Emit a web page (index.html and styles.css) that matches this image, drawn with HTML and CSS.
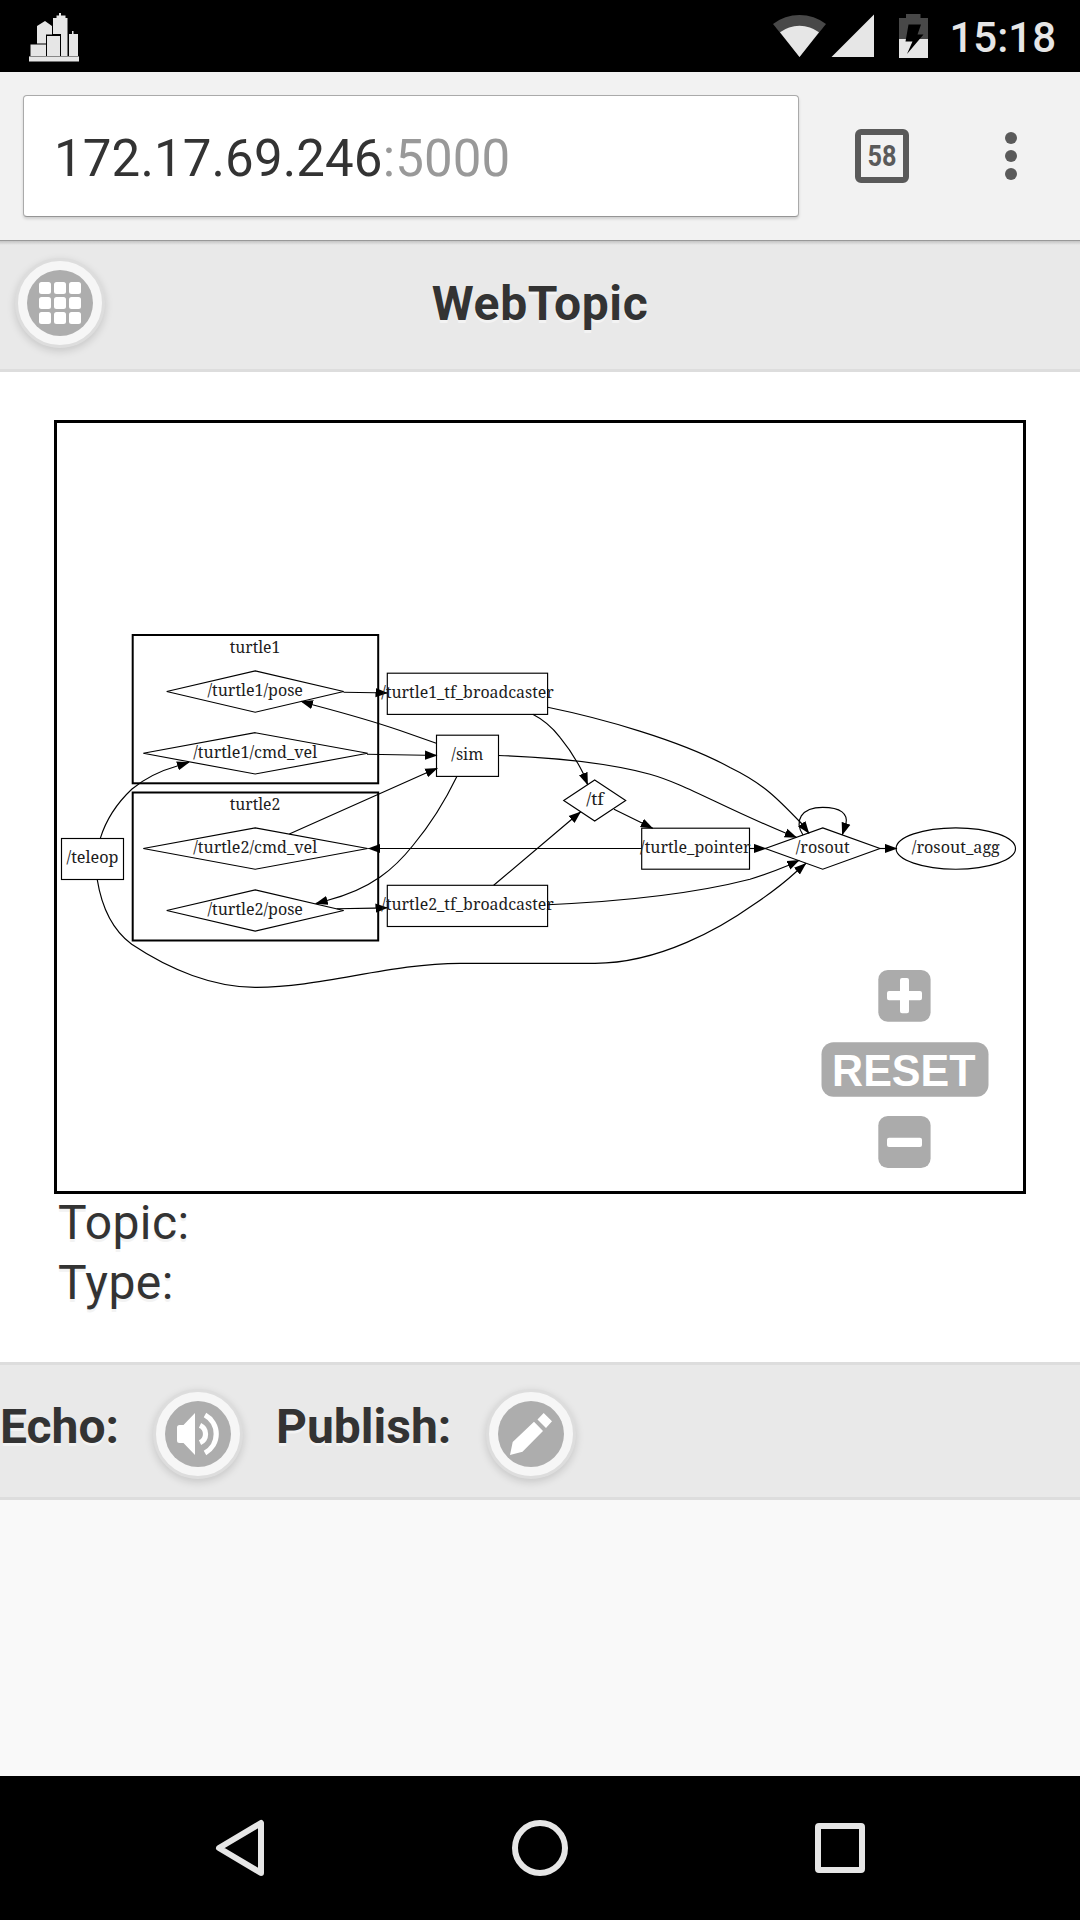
FILE: index.html
```html
<!DOCTYPE html>
<html lang="en">
<head>
<meta charset="utf-8">
<title>WebTopic</title>
<link rel="stylesheet" href="styles.css">
</head>
<body>
<div class="status-bar">
  <svg class="city" width="50" height="50" viewBox="29 12 50 50">
    <path d="M29 57h50v4.500H29zM37 43.500V26l8-5 7 5v8.500h-6v9zM53 34V18h3.500v-2.500H59V13h2v2.500h4.500V18h2v38.500H61V34zM69 56.500V34h3v-3h1.500v3h4.500v22.500z"/>
    <path class="dim" d="M29 56h50v1H29z"/>
    <path d="M30.500 44.500h15.500v11.500H30.500zM47 36h13v20H47z"/>
  </svg>
  <div class="status-right">
    <svg width="155" height="46" viewBox="773 13 155 46">
      <path class="faint" d="M773 24a43.500 43.500 0 0 1 53 0L799.500 57z"/>
      <path d="M780 32.300a32 32 0 0 1 39 0L799.500 57zM831.500 57H874V14.500z"/>
      <path class="faint" d="M906 14h14.500v4h7.500v21h-29V18h7z"/>
      <path d="M899 39h29v19h-29z"/>
      <path class="bolt" d="M908.500 24.500H921l-3.500 10h6L907 54l5.500-12.500h-7z"/>
    </svg>
    <span class="clock">15:18</span>
  </div>
</div>
<div class="toolbar">
  <div class="url">172.17.69.246<span class="port">:5000</span></div>
  <svg class="tabs" width="54" height="54" viewBox="0 0 54 54">
    <rect x="3" y="3" width="48" height="48" rx="3"/>
    <text x="27" y="37" textLength="29" lengthAdjust="spacingAndGlyphs">58</text>
  </svg>
  <svg class="more" width="12" height="48" viewBox="0 0 12 48">
    <circle cx="6" cy="6" r="6"/><circle cx="6" cy="24" r="6"/><circle cx="6" cy="42" r="6"/>
  </svg>
</div>
<header class="header">
  <a class="round"><svg width="66" height="66" viewBox="0 0 66 66">
    <circle class="disc" cx="33" cy="33" r="33"/>
    <g><rect x="12" y="12" width="12" height="12" rx="2.500"/><rect x="27" y="12" width="12" height="12" rx="2.500"/><rect x="42" y="12" width="12" height="12" rx="2.500"/>
    <rect x="12" y="27" width="12" height="12" rx="2.500"/><rect x="27" y="27" width="12" height="12" rx="2.500"/><rect x="42" y="27" width="12" height="12" rx="2.500"/>
    <rect x="12" y="42" width="12" height="12" rx="2.500"/><rect x="27" y="42" width="12" height="12" rx="2.500"/><rect x="42" y="42" width="12" height="12" rx="2.500"/></g>
  </svg></a>
  <h1>WebTopic</h1>
</header>
<main class="content">
  <div class="panel">
    <svg class="graph" width="966" height="768" viewBox="57 423 966 768">
      <defs>
        <marker id="arrow" markerUnits="userSpaceOnUse" markerWidth="14" markerHeight="10" refX="12" refY="5" orient="auto"><path d="M0 .4L12.500 5 0 9.600z"/></marker>
      </defs>
      <g class="cluster">
        <rect x="132.700" y="635" width="245.500" height="148.300"/>
        <rect x="132.700" y="792.500" width="245.500" height="148"/>
      </g>
      <g class="node">
        <path d="M255.200 670.900L343.700 691.500 255.200 712.200 166.700 691.500z"/>
        <path d="M255.200 732.700L367.700 753.300 255.200 774 143.300 753.300z"/>
        <path d="M255.200 827.900L367.700 848.500 255.200 869.200 143.300 848.500z"/>
        <path d="M255.200 889.900L343.700 910.500 255.200 931.100 166.700 910.500z"/>
        <rect x="61.500" y="838.500" width="62" height="41"/>
        <rect x="387.300" y="673.200" width="160.300" height="41.200"/>
        <rect x="387.300" y="885.300" width="160.300" height="41.200"/>
        <rect x="436.500" y="735.200" width="62" height="41.200"/>
        <rect x="641.700" y="828.200" width="107.800" height="41"/>
        <path d="M594.700 779.900L625.700 800.500 594.700 821 563.700 800.500z"/>
        <path d="M822.700 827.900L880 848.500 822.700 869.200 765.300 848.500z"/>
        <ellipse cx="955.800" cy="848.500" rx="59.700" ry="20.700"/>
      </g>
      <g class="edge">
        <path d="M343.500 692.200L375 692.700 387.500 693"/>
        <path d="M436.300 743.300L400 730.500C370 720 340 712 312.500 704.700L301 701.300"/>
        <path d="M367 754.300L425 755.200 437 755.400"/>
        <path d="M100.300 838.300C106 820 116 804 132 789C145 778 161 770.500 178 765.700L189 762.300"/>
        <path d="M97.200 879.300C101 903 110 928 131.700 944.300C170 970 214 987.300 255 987.300C320 987.800 390 963.300 460 963.300L595 963.300C660 963.300 722 927 753 905C768 895 783 884 796.500 871.500L806 863.300"/>
        <path d="M289.300 834L425.500 773.300 437.300 768.300"/>
        <path d="M457 776.300C446 799 430 825 413.300 845C395 868 372 889 327 900.500L315.700 903.500"/>
        <path d="M336.700 908.700L375 908.100 387.500 907.700"/>
        <path d="M532.700 714.300Q548 722 560 737.300Q573 753 583 773L587.700 784.700"/>
        <path d="M547.700 707.300C600 718 680 740 730 767.500C764 784 778 799 801.500 823.500L809 833.300"/>
        <path d="M498.700 755.500C555 757.500 605 762 650 774.200C685 784 720 806 785.500 833L796.700 837.500"/>
        <path d="M493.700 885.300L571.500 819.500 580.700 811.700"/>
        <path d="M614 809.300L642 823 652.700 828.200"/>
        <path d="M641.700 848.500H380 368.300"/>
        <path d="M749.700 848.500H754 766"/>
        <path d="M547.700 904.700C610 902 685 896 750 879.300C764 875 776 870.500 788 865.500L799.300 860.300"/>
        <path d="M803 835C794 821 801 807.300 822.700 807.300C841 807.300 848 814 846 823.500L842.300 834.700"/>
        <path d="M880 848.500H885 897"/>
      </g>
      <g class="label">
        <text x="255" y="653" textLength="50.500" lengthAdjust="spacingAndGlyphs">turtle1</text>
        <text x="255" y="810" textLength="50.500" lengthAdjust="spacingAndGlyphs">turtle2</text>
        <text x="255.200" y="696" textLength="95.500" lengthAdjust="spacingAndGlyphs">/turtle1/pose</text>
        <text x="255.200" y="758" textLength="124" lengthAdjust="spacingAndGlyphs">/turtle1/cmd_vel</text>
        <text x="255.200" y="853" textLength="124" lengthAdjust="spacingAndGlyphs">/turtle2/cmd_vel</text>
        <text x="255.200" y="915" textLength="95.500" lengthAdjust="spacingAndGlyphs">/turtle2/pose</text>
        <text x="92.500" y="863" textLength="52" lengthAdjust="spacingAndGlyphs">/teleop</text>
        <text x="467.300" y="760" textLength="32" lengthAdjust="spacingAndGlyphs">/sim</text>
        <text x="467.600" y="698" textLength="172.500" lengthAdjust="spacingAndGlyphs">/turtle1_tf_broadcaster</text>
        <text x="467.600" y="910" textLength="172.500" lengthAdjust="spacingAndGlyphs">/turtle2_tf_broadcaster</text>
        <text x="595" y="805" textLength="17.500" lengthAdjust="spacingAndGlyphs">/tf</text>
        <text x="695.300" y="853" textLength="110.500" lengthAdjust="spacingAndGlyphs">/turtle_pointer</text>
        <text x="822.700" y="853" textLength="54" lengthAdjust="spacingAndGlyphs">/rosout</text>
        <text x="955.800" y="853" textLength="88" lengthAdjust="spacingAndGlyphs">/rosout_agg</text>
      </g>
      <g class="control">
        <rect x="878.300" y="970" width="52.300" height="51.700" rx="9.500"/>
        <path d="M902 978h5a2 2 0 0 1 2 2v11h11a2 2 0 0 1 2 2v5.300a2 2 0 0 1-2 2h-11v11a2 2 0 0 1-2 2h-5a2 2 0 0 1-2-2v-11h-11a2 2 0 0 1-2-2V993a2 2 0 0 1 2-2h11v-11a2 2 0 0 1 2-2z"/>
        <rect x="821.500" y="1042.300" width="167" height="54.400" rx="12"/>
        <text x="903.800" y="1085.700" textLength="143.500" lengthAdjust="spacingAndGlyphs">RESET</text>
        <rect x="878.300" y="1116" width="52.300" height="52" rx="9.500"/>
        <path d="M889 1137.700h31a2 2 0 0 1 2 2v5.300a2 2 0 0 1-2 2h-31a2 2 0 0 1-2-2v-5.300a2 2 0 0 1 2-2z"/>
      </g>
    </svg>
  </div>
  <div class="info"><div>Topic:</div><div>Type:</div></div>
</main>
<footer class="footer">
  <span class="echo">Echo:</span>
  <a class="round"><svg width="66" height="66" viewBox="0 0 66 66">
    <circle class="disc" cx="33" cy="33" r="33"/>
    <path d="M30 12v42L18.500 42H14.500q-2.500 0-2.500-2.500v-13q0-2.500 2.500-2.500h4z"/>
    <path class="wave" d="M35 24.300a9.600 9.600 0 0 1 0 17.400M40 14a21.700 21.700 0 0 1 0 38"/>
  </svg></a>
  <span class="publish">Publish:</span>
  <a class="round"><svg width="66" height="66" viewBox="0 0 66 66">
    <circle class="disc" cx="33" cy="33" r="33"/>
    <path d="M12 54l2.700-13L36 20.800l9 9.200-20.500 20.800zM39.500 18.500l6.200-6.500 8.300 8.300-6 6.700z"/>
  </svg></a>
</footer>
<div class="blank"></div>
<nav class="nav">
  <svg width="650" height="58" viewBox="215 1819 650 58">
    <path d="M261 1823v50L219 1848z"/><circle cx="540" cy="1848" r="25"/><rect x="818" y="1826" width="44" height="44" rx="1"/>
  </svg>
</nav>
</body>
</html>
```
FILE: styles.css
```css
* { box-sizing: border-box; }
body { margin: 0; width: 1080px; height: 1920px; overflow: hidden; display: flex; flex-direction: column; background: #f9f9f9; color: #333; font: 48px/60px Roboto, sans-serif; }
svg { display: block; }
.status-bar { height: 72px; flex: none; background: #000; display: flex; justify-content: space-between; align-items: flex-start; padding: 12px 24px 0 29px; fill: #e6e6e6; }
.dim { fill: #888; }
.faint { fill: #484848; }
.bolt { fill: #000; }
.status-right { display: flex; gap: 21px; padding-top: 1px; }
.clock { color: #e6e6e6; font-weight: 500; font-size: 42px; line-height: 50px; }
.toolbar { height: 168px; flex: none; background: #f2f2f2; display: flex; align-items: flex-start; padding: 23px 63px 0 23px; }
.url { width: 776px; height: 122px; background: #fff; border: 1px solid #aaa; border-bottom-color: #959595; border-radius: 4px; box-shadow: 0 2px 3px rgba(0,0,0,.15); padding: 0 30px; font-size: 51px; letter-spacing: .13px; line-height: 126px; }
.port { color: #999; }
.tabs { margin: 34px 0 0 56px; }
.tabs rect { fill: none; stroke: #5a5a5a; stroke-width: 6; }
.tabs text { fill: #5a5a5a; font-weight: 700; font-size: 30px; text-anchor: middle; }
.more { margin: 37px 0 0 96px; fill: #5a5a5a; }
.header { height: 132px; flex: none; background: linear-gradient(#999 1px, #c4c4c4 1px, #e9e9e9 5px); border-bottom: 3px solid #ddd; padding: 18px 15px 0; display: grid; grid-template-columns: 90px 1fr 90px; }
h1 { margin: 16px 0 0; text-align: center; font-size: 48px; line-height: 60px; font-weight: 700; letter-spacing: .6px; text-shadow: 0 3px 0 #f3f3f3; }
.round { width: 90px; height: 90px; border-radius: 50%; border: 3px solid #ddd; background: #f6f6f6; padding: 9px; box-shadow: 0 3px 9px rgba(0,0,0,.15); fill: #fff; }
.disc { fill: #adadad; }
.wave { fill: none; stroke: #fff; stroke-width: 5.2; }
.content { height: 990px; flex: none; background: #fff; padding: 48px 54px 0; }
.panel { height: 774px; border: 3px solid #000; }
.info { margin-top: -1px; padding: 0 4px; letter-spacing: .4px; text-shadow: 0 3px 0 #f3f3f3; }
.cluster rect { fill: none; stroke: #000; stroke-width: 2; }
.node { fill: none; stroke: #000; stroke-width: 1.15; }
.edge path { fill: none; stroke: #000; stroke-width: 1.15; marker-end: url(#arrow); }
marker path { fill: #000; }
.label { font: 16px "Noto Serif", "Droid Serif", "DejaVu Serif", serif; text-anchor: middle; fill: #1c1c1c; }
.control rect { fill: #ababab; }
.control path, .control text { fill: #fff; }
.control text { font: bold 45px "Liberation Sans", Arial, sans-serif; text-anchor: middle; }
.footer { height: 138px; flex: none; background: #e9e9e9; border: solid #ddd; border-width: 3px 0; display: flex; padding-top: 24px; font-weight: 700; text-shadow: 0 3px 0 #f3f3f3; }
.echo { width: 153px; padding-top: 8px; }
.publish { width: 210px; margin-left: 33px; padding-top: 8px; }
.footer .round { flex: none; }
.blank { flex: 1; }
.nav { height: 144px; flex: none; background: #000; display: flex; align-items: center; padding-left: 215px; fill: none; stroke: #e6e6e6; stroke-width: 6; stroke-linejoin: round; }
```
